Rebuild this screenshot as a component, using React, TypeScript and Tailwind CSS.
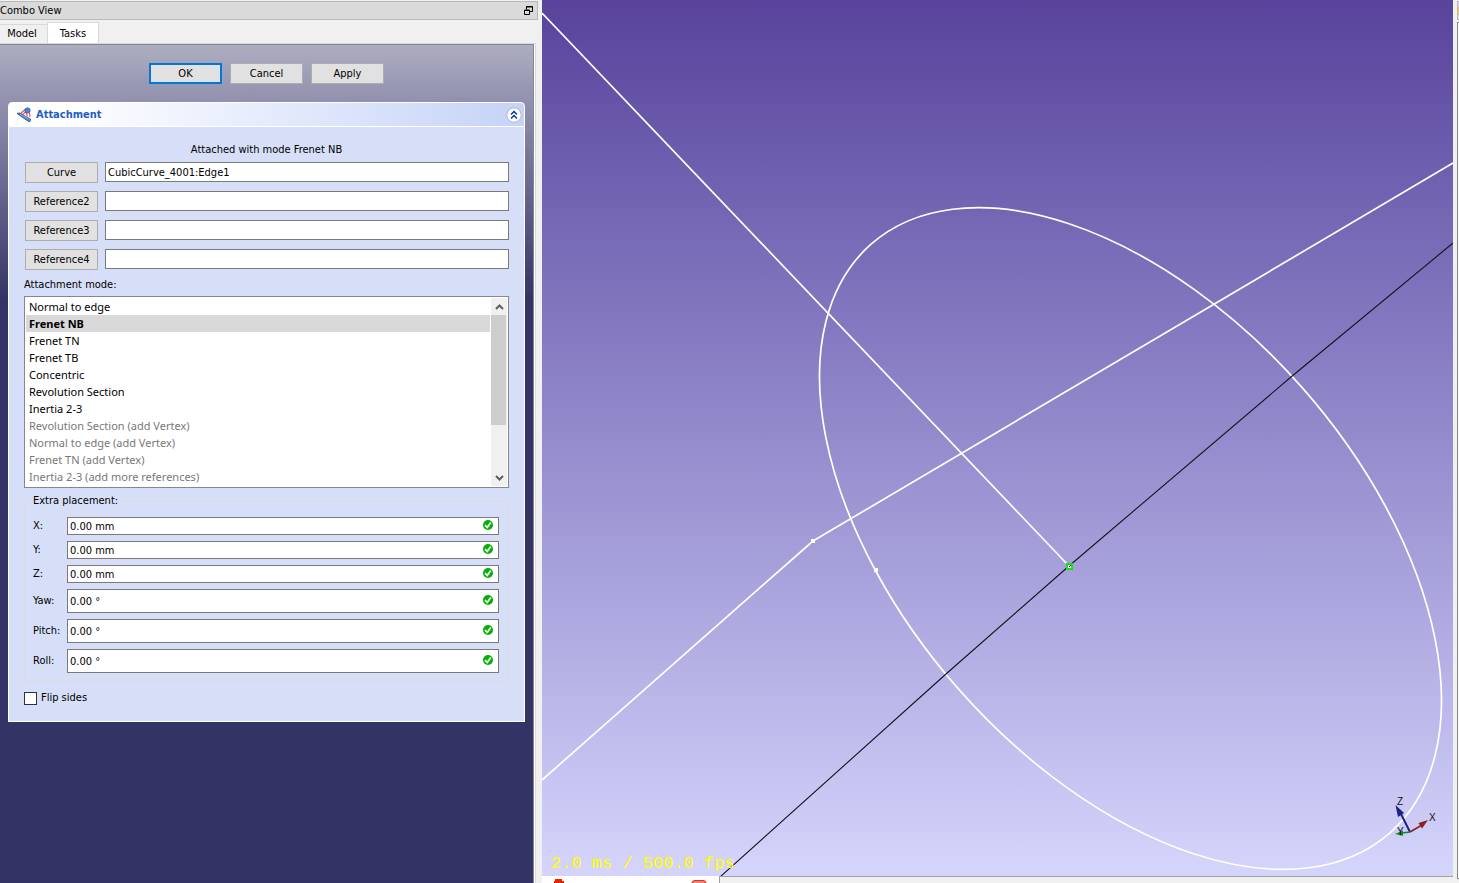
import React, { useState } from "react";

const modes = [
  { label: "Normal to edge", enabled: true },
  { label: "Frenet NB", enabled: true },
  { label: "Frenet TN", enabled: true },
  { label: "Frenet TB", enabled: true },
  { label: "Concentric", enabled: true },
  { label: "Revolution Section", enabled: true },
  { label: "Inertia 2-3", enabled: true },
  { label: "Revolution Section (add Vertex)", enabled: false },
  { label: "Normal to edge (add Vertex)", enabled: false },
  { label: "Frenet TN (add Vertex)", enabled: false },
  { label: "Inertia 2-3 (add more references)", enabled: false },
];

const references = [
  { label: "Curve", value: "CubicCurve_4001:Edge1" },
  { label: "Reference2", value: "" },
  { label: "Reference3", value: "" },
  { label: "Reference4", value: "" },
];

const offsets = [
  { label: "X:", value: "0.00 mm" },
  { label: "Y:", value: "0.00 mm" },
  { label: "Z:", value: "0.00 mm" },
];

const angles = [
  { label: "Yaw:", value: "0.00 °" },
  { label: "Pitch:", value: "0.00 °" },
  { label: "Roll:", value: "0.00 °" },
];

function AttachmentIcon() {
  return (
    <svg width="16" height="16" viewBox="0 0 16 16" aria-hidden="true">
      <path d="M4.5 6.500 L9 2.500 M6 8 L9.500 5 M13.500 6 L14 10 M10 6 L11.500 9" stroke="#f04848" strokeWidth="1.1" fill="none" />
      <path d="M1 6.500 L3.500 6 L14.500 12 L14 14.500 L12.500 14.500 Z" fill="#4b86dc" stroke="#3a5578" strokeWidth="0.9" />
      <path d="M4 7 L13.500 12.500" stroke="#9cc0f4" strokeWidth="0.7" />
      <circle cx="11.500" cy="3.500" r="2.700" fill="#4f80d4" stroke="#31579c" strokeWidth="0.7" />
    </svg>
  );
}

function CheckIcon() {
  return (
    <svg width="10" height="10" viewBox="0 0 10 10" className="absolute right-[6px] top-1/2 -mt-[6px]" aria-hidden="true">
      <circle cx="5" cy="5" r="5" fill="#06b006" />
      <path d="M2 5.2 L4.2 7.4 L7.8 2.4" stroke="#fff" strokeWidth="1.7" fill="none" />
    </svg>
  );
}

function DialogButton({ children, primary = false }: { children: React.ReactNode; primary?: boolean }) {
  return (
    <button
      type="button"
      className={
        primary
          ? "h-[21px] w-[73px] border-2 border-[#0078d7] bg-[#e1e1e1] leading-[17px]"
          : "h-[21px] w-[73px] border border-[#adadad] bg-[#e1e1e1] leading-[19px]"
      }
    >
      {children}
    </button>
  );
}

function PlacementField({ label, value, tall = false }: { label: string; value: string; tall?: boolean }) {
  return (
    <label className="flex items-center">
      <span className="w-[34px] shrink-0">{label}</span>
      <span className="relative flex-1">
        <input
          defaultValue={value}
          className={
            tall
              ? "block h-6 w-full border border-[#7a7a7a] bg-white pl-[2px] pr-5 outline-none"
              : "block h-[18px] w-full border border-[#7a7a7a] bg-white pl-[2px] pr-5 outline-none"
          }
        />
        <CheckIcon />
      </span>
    </label>
  );
}

function ModeList() {
  const [selected, setSelected] = useState("Frenet NB");
  return (
    <div className="flex border border-[#828790] bg-white p-px">
      <ul
        role="listbox"
        aria-labelledby="mode-label"
        className="mb-px mr-px flex-1 font-['Noto_Sans','Open_Sans',sans-serif] text-[11px] leading-[17px]"
      >
        {modes.map((m) => (
          <li
            key={m.label}
            role="option"
            aria-selected={m.label === selected}
            aria-disabled={!m.enabled}
            onClick={() => m.enabled && setSelected(m.label)}
            className={
              m.label === selected
                ? "bg-[#d9d9d9] pl-[3px] font-bold"
                : m.enabled
                  ? "pl-[3px]"
                  : "pl-[3px] text-[#787878]"
            }
          >
            {m.label}
          </li>
        ))}
      </ul>
      <div className="flex w-4 flex-col bg-[#f0f0f0]" aria-hidden="true">
        <div className="flex h-[17px] items-center justify-center">
          <svg width="9" height="6" viewBox="0 0 9 6">
            <path d="M1 5 L4.5 1.5 L8 5" stroke="#606060" strokeWidth="2" fill="none" />
          </svg>
        </div>
        <div className="mr-px h-[110px] bg-[#cdcdcd]" />
        <div className="flex flex-1 items-end justify-center pb-[5px]">
          <svg width="9" height="6" viewBox="0 0 9 6">
            <path d="M1 1 L4.5 4.5 L8 1" stroke="#606060" strokeWidth="2" fill="none" />
          </svg>
        </div>
      </div>
    </div>
  );
}

function AttachmentPanel() {
  return (
    <section className="mx-2 mt-[18px]">
      <header className="flex h-[25px] items-center rounded-t-[4px] border border-white bg-linear-to-r from-white from-10% to-[#c6d3f7] pl-[7px] pr-[2px]">
        <AttachmentIcon />
        <h2 className="ml-1 flex-1 text-[11px] font-bold text-[#215dc6]">Attachment</h2>
        <button type="button" aria-label="Collapse" className="block">
          <svg width="16" height="16" viewBox="0 0 16 16">
            <circle cx="8" cy="8" r="7.3" fill="#fff" stroke="#b4bde0" strokeWidth="1.2" />
            <path d="M5 7.5 L8 4.5 L11 7.5 M5 11.5 L8 8.5 L11 11.5" stroke="#0a329c" strokeWidth="1.5" fill="none" />
          </svg>
        </button>
      </header>
      <div className="border-x border-b border-white bg-[#d6dff7] px-[15px] pb-4 pt-4">
        <p className="text-center leading-[14px]">Attached with mode Frenet NB</p>
        <div className="mt-[5px] flex flex-col gap-2">
          {references.map((r) => (
            <div key={r.label} className="flex items-start gap-[7px] pl-px">
              <button type="button" className="h-[21px] w-[73px] border border-[#adadad] bg-[#e1e1e1]">
                {r.label}
              </button>
              <input
                aria-label={r.label}
                defaultValue={r.value}
                className="h-5 min-w-0 flex-1 border border-[#7a7a7a] bg-white pl-[2px] outline-none"
              />
            </div>
          ))}
        </div>
        <p id="mode-label" className="mb-1 mt-2 leading-[14px]">
          Attachment mode:
        </p>
        <ModeList />
        <fieldset className="mt-[6px] border border-[#dcdcdc] pb-2 pl-2 pr-[9px]">
          <legend className="px-0 leading-[14px]">Extra placement:</legend>
          <div className="mt-[9px] flex flex-col gap-[6px]">
            {offsets.map((f) => (
              <PlacementField key={f.label} label={f.label} value={f.value} />
            ))}
            {angles.map((f) => (
              <PlacementField key={f.label} label={f.label} value={f.value} tall />
            ))}
          </div>
        </fieldset>
        <label className="mt-[9px] flex items-center gap-1">
          <input type="checkbox" className="h-[13px] w-[13px] appearance-none border border-[#333] bg-white checked:bg-[#0078d7]" />
          <span className="leading-[14px]">Flip sides</span>
        </label>
      </div>
    </section>
  );
}

function ComboView() {
  return (
    <aside className="flex w-[542px] shrink-0 flex-col bg-[#f0f0f0] pr-1 pt-px">
      <div className="flex h-[19px] items-center justify-between border-y border-r border-[#b9b9b9] bg-[#dadada] pr-1">
        <h1>Combo View</h1>
        <button type="button" aria-label="Float" className="block">
          <svg width="9" height="9" viewBox="0 0 9 9">
            <path d="M0.5 4 H5.5 V8.5 H0.5 Z M0 4.5 H6 M2.5 3.5 V0.5 H8.5 V5.5 H6 M2 1 H9" stroke="#000" fill="none" />
          </svg>
        </button>
      </div>
      <div role="tablist" className="mt-[2px] flex h-[21px] items-end">
        <button type="button" role="tab" aria-selected="false" className="h-[19px] w-[47px] border-t border-[#d9d9d9] pr-[3px]">
          Model
        </button>
        <button type="button" role="tab" aria-selected="true" className="h-[21px] w-[52px] border-x border-t border-[#d9d9d9] bg-white pt-px">
          Tasks
        </button>
      </div>
      <div className="mr-[2px] flex flex-1 flex-col border-r border-t border-[#d9d9d9] bg-white pr-px">
        <div className="flex-1 border-r border-t border-[#828790] bg-[linear-gradient(to_bottom,#adadc1_0px,#9190ae_57px,#5a5883_176px,#333365_255px)] pt-[18px]">
          <div className="flex justify-center gap-2">
            <DialogButton primary>OK</DialogButton>
            <DialogButton>Cancel</DialogButton>
            <DialogButton>Apply</DialogButton>
          </div>
          <AttachmentPanel />
        </div>
      </div>
    </aside>
  );
}

function Viewport() {
  return (
    <main className="flex min-w-0 flex-1 flex-col">
      <div className="relative flex-1 overflow-hidden bg-linear-to-b from-[#59439c] to-[#d5d5fc]">
        <svg className="absolute inset-0 h-full w-full" viewBox="0 0 911 876" preserveAspectRatio="xMidYMid slice" aria-label="3D view">
          <g stroke="#fff" strokeWidth="1.7" fill="none">
            <path d="M0 13 L527 566" />
            <path d="M0 780 L271 541 L911 163" />
            <ellipse cx="588.5" cy="538.5" rx="392.3" ry="228.6" transform="rotate(48.6 588.5 538.5)" />
          </g>
          <path d="M178 877 L404 674 L527 566 L749 377 L911 243" stroke="#14141e" strokeWidth="1.1" fill="none" />
          <rect x="269" y="539" width="4" height="4" fill="#fff" />
          <rect x="332" y="568" width="4" height="4" fill="#fff" />
          <rect x="525" y="564" width="5" height="5" fill="#fff" stroke="#20d820" strokeWidth="2" />
          <path d="M527 567 L529 565" stroke="#14141e" />
          <path d="M868 832 L858 812" stroke="#20207e" strokeWidth="2" />
          <path d="M853.5 805 L862 813 L856 817 Z" fill="#20207e" />
          <path d="M868 832 L880 825" stroke="#8a2020" strokeWidth="1.6" />
          <path d="M886 820 L876.5 823 L880 828.5 Z" fill="#8a2020" />
          <path d="M868 832 L860 833" stroke="#188a24" strokeWidth="1.6" />
          <path d="M853 834 L861 830.5 L861 836 Z" fill="#188a24" />
          <g fill="#111" className="font-['Liberation_Sans',sans-serif] text-[10px]">
            <text x="855" y="805">Z</text>
            <text x="887" y="821">X</text>
            <text x="855" y="835">Y</text>
          </g>
        </svg>
        <p className="absolute bottom-[2px] left-[9px] font-['Liberation_Mono',monospace] text-[17px] leading-5 text-[#ffff00]">
          2.0 ms / 500.0 fps
        </p>
      </div>
      <div className="flex h-[7px]">
        <div className="flex w-[177px] items-end justify-between bg-white pl-3 pr-3" aria-hidden="true">
          <svg width="10" height="4" viewBox="0 0 10 4">
            <path d="M1 0 H8 V2 H10 V4 H0 V2 H1 Z" fill="#e8230c" />
          </svg>
          <svg width="16" height="3" viewBox="0 0 16 3">
            <path d="M1 3 Q1 0.5 4 0.5 H12 Q15 0.5 15 3" fill="#f08070" stroke="#c8382c" />
          </svg>
        </div>
        <div className="flex-1 border-l border-t border-[#a0a0a0] bg-[#f0f0f0]" />
      </div>
    </main>
  );
}

function RightDock() {
  return (
    <div className="flex w-[6px] shrink-0 flex-col bg-[#f0f0f0] pl-1 pt-px" aria-hidden="true">
      <div className="h-[19px] border-y border-l border-[#b9b9b9] bg-[#dadada] py-[5px]">
        <div className="h-2 bg-[#e0c878]" />
      </div>
      <div className="mb-1 mt-[2px] flex-1 border-y border-l border-[#828790] bg-white" />
    </div>
  );
}

export default function App() {
  return (
    <div className="flex min-h-screen overflow-hidden bg-[#f0f0f0] font-['DejaVu_Sans_Condensed','DejaVu_Sans',sans-serif] text-[11px] leading-[14px] text-black">
      <ComboView />
      <Viewport />
      <RightDock />
    </div>
  );
}
